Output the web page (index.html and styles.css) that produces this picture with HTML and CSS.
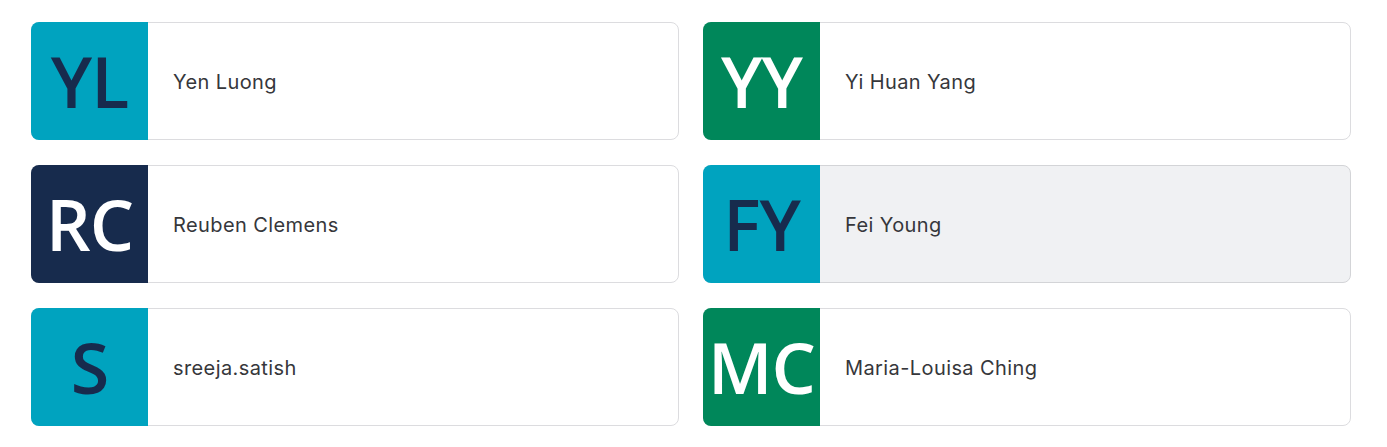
FILE: index.html
```html
<!DOCTYPE html>
<html lang="en">
<head>
    <meta charset="UTF-8">
    <title>People</title>
    <link rel="stylesheet" href="styles.css">
</head>
<body>
    <div class="people">
        <div class="person">
            <div class="avatar teal">YL</div>
            <div class="name">Yen Luong</div>
        </div>
        <div class="person">
            <div class="avatar green">YY</div>
            <div class="name">Yi Huan Yang</div>
        </div>
        <div class="person">
            <div class="avatar navy">RC</div>
            <div class="name">Reuben Clemens</div>
        </div>
        <div class="person hover">
            <div class="avatar teal">FY</div>
            <div class="name">Fei Young</div>
        </div>
        <div class="person">
            <div class="avatar teal">S</div>
            <div class="name">sreeja.satish</div>
        </div>
        <div class="person">
            <div class="avatar green">MC</div>
            <div class="name">Maria-Louisa Ching</div>
        </div>
    </div>
</body>
</html>
```

FILE: styles.css
```css
body {
    margin: 0;
    padding: 0;
    background-color: #ffffff;
    font-family: Inter, "Liberation Sans", sans-serif;
}

.people {
    display: grid;
    grid-template-columns: 648px 648px;
    column-gap: 24px;
    row-gap: 25px;
    padding: 22px 0 0 31px;
}

.person {
    display: flex;
    align-items: center;
    height: 118px;
    box-sizing: border-box;
    border: 1px solid #dcdcdf;
    border-radius: 8px;
    background-color: #ffffff;
}

.person.hover {
    background-color: #f0f1f3;
    border-color: #d3d4d7;
}

.avatar {
    width: 117px;
    height: 118px;
    margin: -1px 0 -1px -1px;
    border-radius: 8px 0 0 8px;
    flex-shrink: 0;
    display: flex;
    align-items: center;
    justify-content: center;
    font-family: "Open Sans", sans-serif;
    font-weight: 600;
    font-size: 70px;
    letter-spacing: -1px;
    color: #172b4d;
    white-space: nowrap;
    overflow: hidden;
}

.avatar.teal {
    background-color: #00a3bf;
}

.avatar.green {
    background-color: #00875a;
    color: #ffffff;
}

.avatar.navy {
    background-color: #172b4d;
    color: #ffffff;
}

.name {
    padding: 2px 0 0 25px;
    font-size: 20px;
    font-weight: 400;
    letter-spacing: 0.4px;
    color: #36373b;
}
```
